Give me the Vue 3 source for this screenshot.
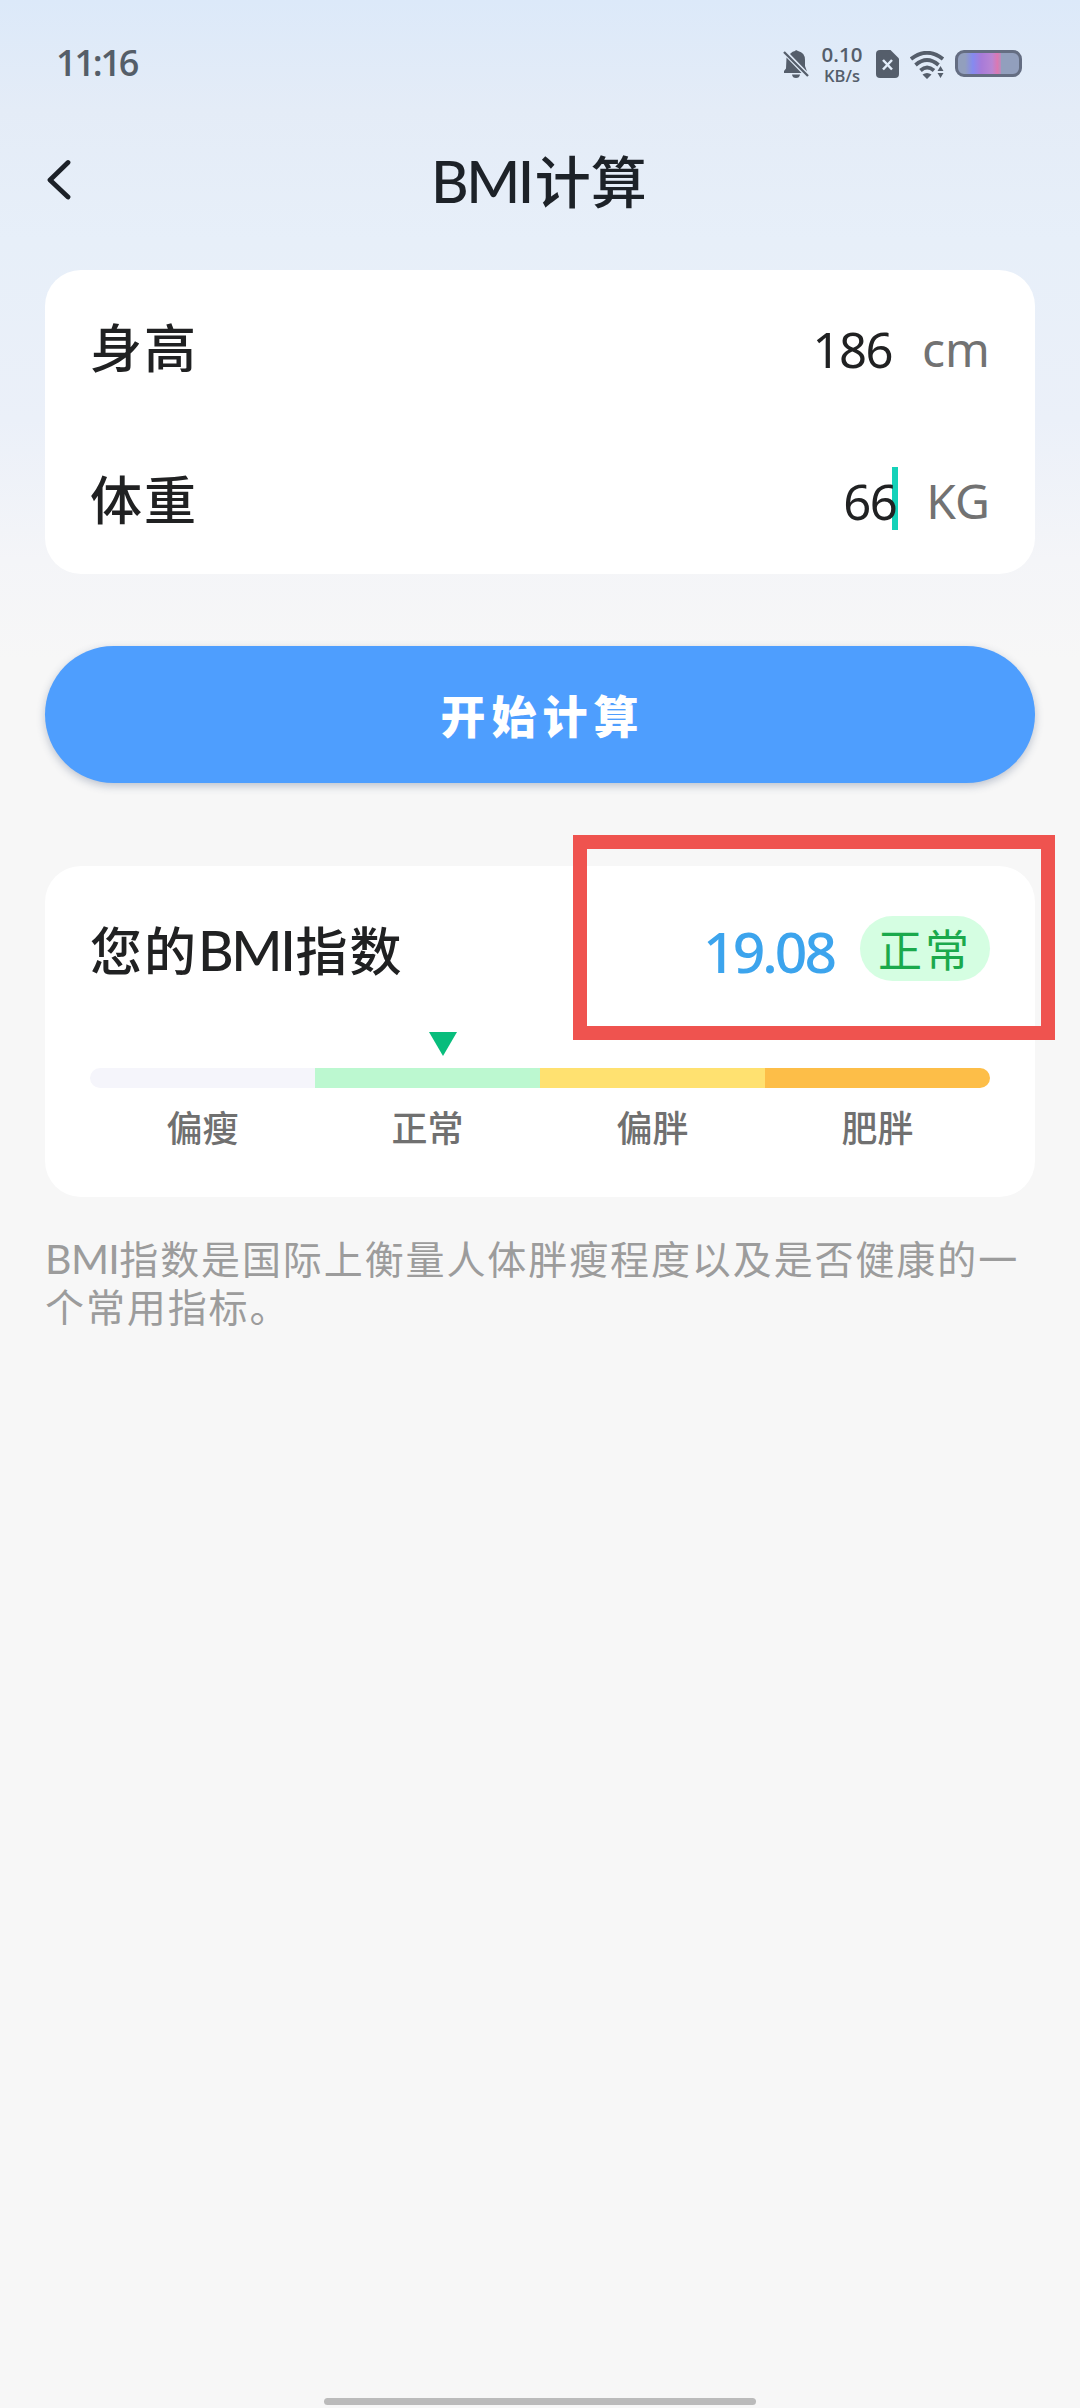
<script setup>
const rows = [
  { label: '身高', value: '186', unit: 'cm', active: false },
  { label: '体重', value: '66', unit: 'KG', active: true },
]
const levels = [
  { name: '偏瘦', color: '#f5f5fb' },
  { name: '正常', color: '#bcf8d0' },
  { name: '偏胖', color: '#ffe170' },
  { name: '肥胖', color: '#fdbe48' },
]
</script>

<template>
  <div class="page">
    <header class="status">
      <span class="time">11:16</span>
      <div class="tray">
        <svg class="bell" width="26" height="28" viewBox="0 0 26 28">
          <path d="M7.5 3.5Q9.5 1.4 12 1L13 0L15 1Q22 2.5 22 10V16L24 21.5L7 4ZM3.5 7.5L18.5 23H1V21L3 18.5ZM9 24.5H17Q16.5 28 13 28Q9.5 28 9 24.5Z" fill="#555e6b" />
          <path d="M1 2L25 26" stroke="#555e6b" stroke-width="2.3" />
        </svg>
        <div class="speed"><span class="rate">0.10</span><span class="per">KB/s</span></div>
        <svg class="sim" width="24" height="28" viewBox="0 0 24 28">
          <path d="M4 0H14.5L23 8.5V24Q23 28 19 28H4Q0 28 0 24V4Q0 0 4 0Z" fill="#555e6b" />
          <path d="M7 10L16 19.5M16 10L7 19.5" stroke="#e3edfa" stroke-width="2.5" />
        </svg>
        <svg class="wifi" width="35" height="28" viewBox="0 0 35 28">
          <g fill="none" stroke="#555e6b" stroke-width="3.8">
            <path d="M1 8Q17 -4.500 33 8" />
            <path d="M5.500 14Q17 4 28.500 14" />
            <path d="M10.500 19.500Q17 13.500 24 19.500" />
          </g>
          <path d="M12.500 23.500Q17 20.500 21.500 23.500L17 28ZM27.500 20L30.500 15L33.500 20ZM27.500 22H33.500L30.500 27Z" fill="#555e6b" />
        </svg>
        <div class="battery"><div class="charge"></div></div>
      </div>
    </header>

    <nav class="nav">
      <svg class="back" width="26" height="42" viewBox="0 0 26 42">
        <path d="M21 3.500L3 21L21 38" fill="none" stroke="#1c2128" stroke-width="4.8" stroke-linecap="round" stroke-linejoin="round" />
      </svg>
      <h1 class="title"><span class="latin">BMI</span>计算</h1>
    </nav>

    <section class="card form">
      <div v-for="row in rows" :key="row.label" class="row">
        <span class="label">{{ row.label }}</span>
        <span class="value">{{ row.value }}<i v-if="row.active" class="caret"></i></span>
        <span class="unit">{{ row.unit }}</span>
      </div>
    </section>

    <button class="submit">开始计算</button>

    <section class="card result">
      <div class="summary">
        <h2 class="heading">您的<span class="latin">BMI</span>指数</h2>
        <span class="score">19.08</span>
        <span class="badge">正常</span>
        <div class="highlight"></div>
      </div>
      <div class="scale">
        <svg class="pointer" width="28" height="24" viewBox="0 0 28 24"><path d="M0 0H28L14 24Z" fill="#08bd7c" /></svg>
        <div class="bar">
          <div v-for="level in levels" :key="level.name" class="segment" :style="{ background: level.color }"></div>
        </div>
        <div class="names">
          <span v-for="level in levels" :key="level.name">{{ level.name }}</span>
        </div>
      </div>
    </section>

    <p class="note"><span class="latin">BMI</span>指数是国际上衡量人体胖瘦程度以及是否健康的一个常用指标。</p>
    <div class="home"></div>
  </div>
</template>

<style>
body { margin: 0; background: #f7f7f7; }
</style>

<style scoped>
* { box-sizing: border-box; }
.page {
  width: 1080px;
  height: 2408px;
  display: flex;
  flex-direction: column;
  overflow: hidden;
  font-family: "Noto Sans CJK SC", sans-serif;
  background: linear-gradient(180deg, #dce9f9 0, #e4ecf7 110px, #e7eff9 240px, #ebf0f9 420px, #f4f5f8 560px, #f7f7f7 660px);
  color: #202122;
}
.status {
  height: 128px;
  padding: 0 58px 0 56px;
  display: flex;
  justify-content: space-between;
}
.time {
  font: 600 36px/50px "Open Sans", sans-serif;
  letter-spacing: -2.2px;
  color: #555e68;
  margin-top: 38px;
}
.tray { display: flex; align-items: flex-start; color: #555e6b; }
.bell { margin-top: 50px; }
.speed {
  width: 42px;
  margin: 43px 0 0 12px;
  display: flex;
  flex-direction: column;
  align-items: center;
  font-family: "Open Sans", sans-serif;
  font-weight: 600;
  white-space: nowrap;
}
.rate { font-size: 20.5px; line-height: 23px; }
.per { font-size: 16.5px; line-height: 20px; }
.sim { margin: 50px 0 0 13px; }
.wifi { margin: 51px 0 0 10px; }
.battery {
  width: 67px;
  height: 27px;
  margin: 50px 0 0 10px;
  border: 3px solid #646d82;
  border-radius: 9px;
  background: #929fbd;
  overflow: hidden;
}
.charge {
  width: 36px;
  height: 100%;
  margin-left: 7px;
  background: linear-gradient(90deg, #929fbd, #858af0 22%, #a77bd9 45%, #b985d3 75%, #db78b2 90%, #b58dbd);
}
.nav {
  height: 142px;
  padding-left: 47px;
  display: flex;
  align-items: flex-start;
}
.back { margin-top: 31px; }
.title {
  margin: 11px 0 0 358px;
  font-size: 56px;
  line-height: 80px;
  font-weight: 500;
  color: #1d2228;
  white-space: nowrap;
}
.title .latin { font: 500 58px/80px Lato, sans-serif; letter-spacing: -2.5px; margin-right: 3px; }
.card {
  width: 990px;
  margin: 0 45px;
  padding: 0 45px;
  border-radius: 36px;
  background: #fff;
}
.form { height: 304px; }
.row { height: 152px; display: flex; align-items: center; }
.label { font-size: 52px; line-height: 76px; font-weight: 500; letter-spacing: 2px; margin-top: 0; }
.value {
  position: relative;
  z-index: 0;
  margin-left: auto;
  margin-top: 6px;
  font: 400 49px/64px "Noto Sans", sans-serif;
  letter-spacing: -1.5px;
}
.caret {
  position: absolute;
  z-index: -1;
  right: -2px;
  top: -2px;
  width: 6px;
  height: 63px;
  background: #14d2b9;
}
.unit {
  margin: 6px 0 0 30px;
  font: 400 48px/64px "Noto Sans", sans-serif;
  color: #727272;
}
.submit {
  width: 990px;
  height: 137px;
  margin: 72px 45px 0;
  padding: 0 0 0 5px;
  border: 0;
  border-radius: 69px;
  background: #4e9efe;
  box-shadow: 0 3px 8px rgba(50, 70, 110, .3);
  color: #fff;
  font: 900 45px/137px "Noto Sans CJK SC", sans-serif;
  letter-spacing: 6px;
}
.result { height: 331px; margin-top: 83px; }
.summary { position: relative; height: 166px; display: flex; align-items: center; }
.heading { margin: 0; font-size: 52px; line-height: 76px; font-weight: 500; letter-spacing: 2px; }
.heading .latin { font: 500 55px/76px Lato, sans-serif; letter-spacing: -2.4px; margin-right: 2px; }
.score {
  margin: 3px 26px 0 auto;
  font: 500 57px/70px "Noto Sans", sans-serif;
  letter-spacing: -3px;
  color: #3ca4ed;
}
.badge {
  width: 130px;
  height: 65px;
  margin-top: -1px;
  border-radius: 33px;
  background: #d5fee2;
  color: #1ba94c;
  font-size: 44px;
  line-height: 65px;
  letter-spacing: 3px;
  padding-left: 18px;
}
.highlight {
  position: absolute;
  left: 483px;
  top: -31px;
  width: 482px;
  height: 205px;
  border: 14px solid #ef534f;
}
.scale { display: flex; flex-direction: column; }
.pointer { margin-left: 339px; }
.bar { height: 20px; margin-top: 12px; display: flex; border-radius: 10px; overflow: hidden; }
.segment { flex: 1; }
.names { margin-top: 13px; display: flex; color: #707070; font-size: 36px; line-height: 50px; font-weight: 500; }
.names span { flex: 1; text-align: center; }
.note {
  margin: 36px 45px 0;
  width: 1000px;
  font-size: 39px;
  line-height: 48px;
  letter-spacing: 1.9px;
  color: #9c9c9c;
}
.note .latin { font-family: Lato, sans-serif; font-size: 41px; line-height: 40px; letter-spacing: -.6px; }
.home { width: 432px; height: 7px; margin: auto auto 3px; border-radius: 4px; background: #bbb; flex: none; }
</style>
